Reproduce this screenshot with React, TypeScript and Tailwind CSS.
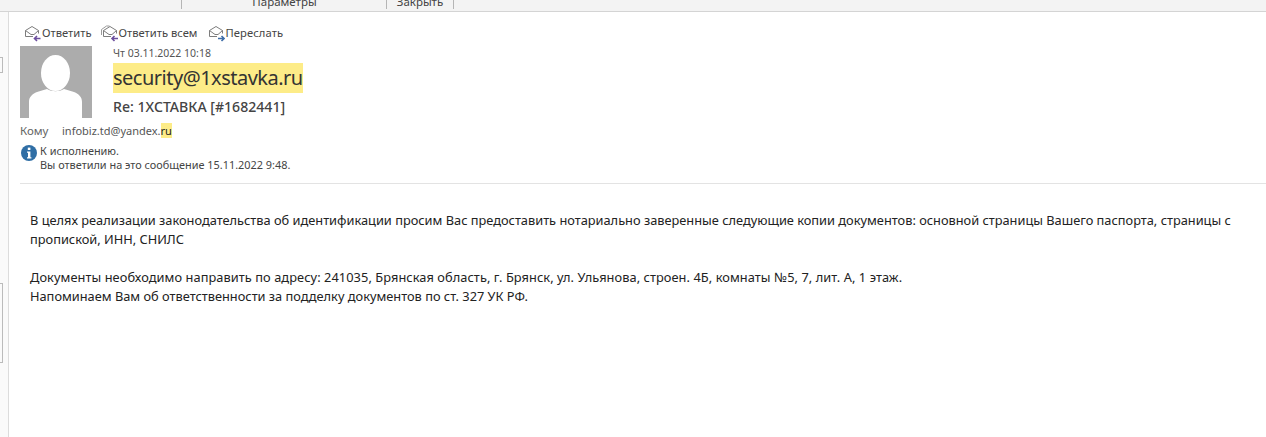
const font = "font-['Noto_Sans','Open_Sans',sans-serif]";

// outline of the open envelope, shared by the three toolbar buttons
function Envelope() {
  return (
    <>
      <path d="M1.5 11.5V5.5L8 1.5l6.5 4v3" stroke="#7d7d7d" strokeWidth="1" />
      <path d="M1.5 5.5 7 9.5h3l4.5-4" stroke="#7d7d7d" strokeWidth="1" />
      <path d="M1.5 11.5H9" stroke="#7d7d7d" strokeWidth="1" />
    </>
  );
}

function ReplyIcon() {
  return (
    <svg width="18" height="17" viewBox="0 0 18 17" fill="none" className="shrink-0">
      <Envelope />
      <path d="M16.5 13.5h-6M13 11l-2.5 2.5L13 16" stroke="#6d4f9e" strokeWidth="1.6" />
    </svg>
  );
}

function ReplyAllIcon() {
  return (
    <svg width="18" height="17" viewBox="0 0 18 17" fill="none" className="shrink-0">
      <path d="M.5 10V4.5L5.5 1h3" stroke="#9a9a9a" strokeWidth="1" />
      <g transform="translate(1 0)">
        <Envelope />
      </g>
      <path d="M17 13.5h-6M13.5 11 11 13.5l2.5 2.5" stroke="#6d4f9e" strokeWidth="1.6" />
    </svg>
  );
}

function ForwardIcon() {
  return (
    <svg width="17" height="17" viewBox="0 0 17 17" fill="none" className="shrink-0">
      <Envelope />
      <path d="M10 13.5h6M13.5 11l2.5 2.5-2.5 2.5" stroke="#3f6ea8" strokeWidth="1.6" />
    </svg>
  );
}

function Avatar() {
  return (
    <svg width="72" height="72" viewBox="0 0 72 72" className="shrink-0">
      <rect width="72" height="72" fill="#acacac" />
      <ellipse cx="35.5" cy="27" rx="14.5" ry="18" fill="#fff" />
      <path d="M9 72V56c0-5 3-8 8-10l10-3c5 3 12 3 17 0l10 3c5 2 8 5 8 10v16z" fill="#fff" />
    </svg>
  );
}

function InfoIcon() {
  return (
    <svg width="16" height="16" viewBox="0 0 16 16" className="shrink-0">
      <circle cx="8" cy="8" r="8" fill="#2f6ea5" />
      <rect x="6.8" y="2.6" width="2.6" height="2.4" fill="#fff" />
      <path d="M6 6.4h3.4v5.8h1v1.3H6v-1.3h1V7.7H6z" fill="#fff" />
    </svg>
  );
}

export default function App() {
  return (
    <div className={`${font} w-[1266px] h-[437px] overflow-hidden bg-white text-[#262626] antialiased`}>
      <div className="h-[12px] bg-[#f3f3f3] border-b border-[#d4d4d4] flex items-end overflow-hidden text-[11.5px] leading-[12px] text-[#444]">
        <div className="w-[182px] h-[9px] border-r border-[#b5b5b5] self-start" />
        <div className="w-[205px] flex justify-center h-[9px] border-r border-[#b5b5b5] self-start">
          <span className="-mt-[4px] pl-[1px]">Параметры</span>
        </div>
        <div className="w-[67px] flex justify-center h-[9px] border-r border-[#b5b5b5] self-start">
          <span className="-mt-[4px]">Закрыть</span>
        </div>
      </div>

      <div className="flex h-[425px]">
        <div className="w-[9px] shrink-0 bg-[#fafafa] border-r border-[#dcdcdc] flex flex-col pt-[45px]">
          <div className="w-[3px] h-[16px] border-y border-r border-[#bbb]" />
          <div className="w-[3px] h-[80px] mt-[210px] border-y border-r border-[#bbb]" />
        </div>

        <div className="flex-1 min-w-0 pl-[11px]">
          <div className="flex items-center h-[34px] pl-[4px] pt-[8px] text-[11.2px] text-[#444] gap-[9px]">
            <div className="flex items-center">
              <ReplyIcon />
              <span>Ответить</span>
            </div>
            <div className="flex items-center">
              <ReplyAllIcon />
              <span>Ответить всем</span>
            </div>
            <div className="flex items-center ml-[2px]">
              <ForwardIcon />
              <span className="tracking-[0.1px]">Переслать</span>
            </div>
          </div>

          <div className="flex">
            <Avatar />
            <div className="pl-[21px] flex flex-col items-start">
              <div className="text-[10.5px] leading-[14px] text-[#555]">Чт 03.11.2022 10:18</div>
              <div className="mt-[3px] bg-[#fdec88] text-[20px] leading-[30px] tracking-[-0.5px] text-[#333]">security@1xstavka.ru</div>
              <div className="mt-[4px] text-[14.1px] leading-[20px] font-medium text-[#444]">Re: 1ХСТАВКА [#1682441]</div>
            </div>
          </div>

          <div className="flex items-center h-[20px] mt-[3px] text-[11px]">
            <span className="w-[42px] text-[11.5px] text-[#666]">Кому</span>
            <span className="text-[#555]">
              infobiz.td@yandex.<span className="bg-[#fdec88] text-[#222]">ru</span>
            </span>
          </div>

          <div className="flex mt-[3px] pl-[1px] text-[10.9px] leading-[14px] text-[#444]">
            <div className="pt-[1px] pr-[3px]">
              <InfoIcon />
            </div>
            <div>
              <div>К исполнению.</div>
              <div>Вы ответили на это сообщение 15.11.2022 9:48.</div>
            </div>
          </div>

          <div className="mt-[11px] border-t border-[#e3e3e3]" />

          <div className="pl-[10px] pr-[10px] pt-[27px] text-[12.8px] leading-[19px] text-[#222]">
            <p>
              В целях реализации законодательства об идентификации просим Вас предоставить нотариально заверенные следующие копии документов: основной страницы Вашего паспорта, страницы с пропиской, ИНН, СНИЛС
            </p>
            <p className="mt-[19px] tracking-[0.07px]">
              Документы необходимо направить по адресу: 241035, Брянская область, г. Брянск, ул. Ульянова, строен. 4Б, комнаты №5, 7, лит. А, 1 этаж.
            </p>
            <p>Напоминаем Вам об ответственности за подделку документов по ст. 327 УК РФ.</p>
          </div>
        </div>
      </div>
    </div>
  );
}
